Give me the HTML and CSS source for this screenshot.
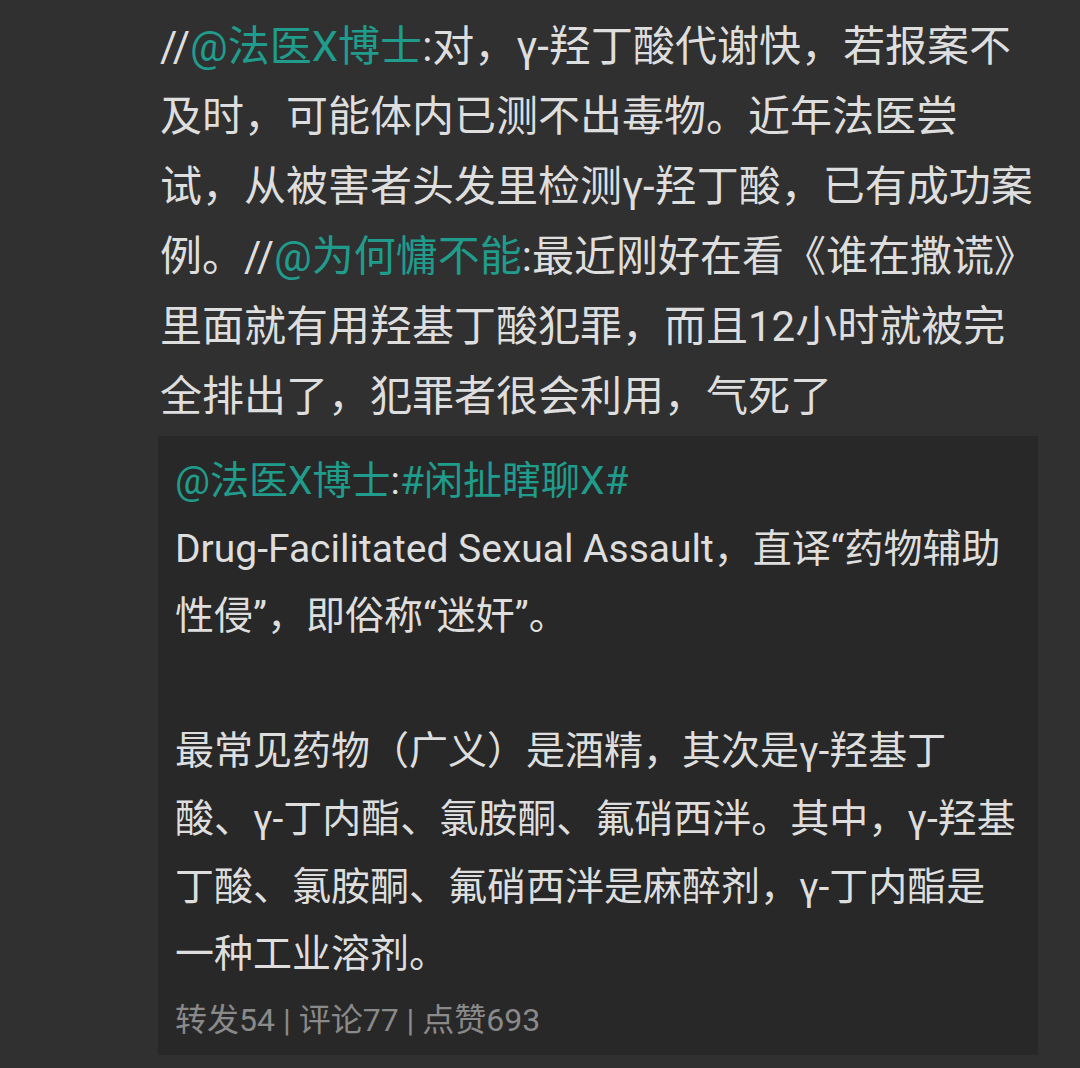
FILE: index.html
```html
<!DOCTYPE html>
<html lang="zh-CN">
<head>
<meta charset="utf-8">
<link rel="stylesheet" href="styles.css">
</head>
<body>
<div class="post">
  <p class="main-text">//<a class="link">@法医X博士</a>:对，γ-羟丁酸代谢快，若报案不<br>及时，可能体内已测不出毒物。近年法医尝<br>试，从被害者头发里检测γ-羟丁酸，已有成功案<br>例。//<a class="link">@为何慵不能</a>:最近刚好在看《谁在撒谎》<br>里面就有用羟基丁酸犯罪，而且12小时就被完<br>全排出了，犯罪者很会利用，气死了</p>
  <div class="quote">
    <p class="quote-text"><a class="link">@法医X博士</a>:<a class="link">#闲扯瞎聊X#</a><br>Drug-Facilitated Sexual Assault，直译“药物辅助<br>性侵”，即俗称“迷奸”。<br><br>最常见药物（广义）是酒精，其次是γ-羟基丁<br>酸、γ-丁内酯、氯胺酮、氟硝西泮。其中，γ-羟基<br>丁酸、氯胺酮、氟硝西泮是麻醉剂，γ-丁内酯是<br>一种工业溶剂。</p>
    <p class="meta">转发54 | 评论77 | 点赞693</p>
  </div>
</div>
</body>
</html>
```
FILE: styles.css
```css
html, body {
  margin: 0;
  padding: 0;
  background: #303030;
}
body {
  width: 1080px;
  height: 1068px;
  overflow: hidden;
  font-family: Roboto, "Noto Sans CJK SC", sans-serif;
  color: #dedede;
}
.post {
  padding: 12px 0 0 160px;
}
.main-text {
  margin: 0;
  font-size: 42px;
  line-height: 70px;
  white-space: nowrap;
}
.link {
  color: #1f9c8b;
  text-decoration: none;
}
.quote {
  margin-top: 4px;
  margin-left: -2px;
  width: 880px;
  box-sizing: border-box;
  background: #282828;
  padding: 12px 0 10px 17px;
}
.quote-text {
  margin: 0;
  font-size: 39px;
  line-height: 67.6px;
  white-space: nowrap;
}
.meta {
  margin: 6px 0 0;
  font-size: 32px;
  line-height: 50px;
  color: #8a8a8a;
}
```
